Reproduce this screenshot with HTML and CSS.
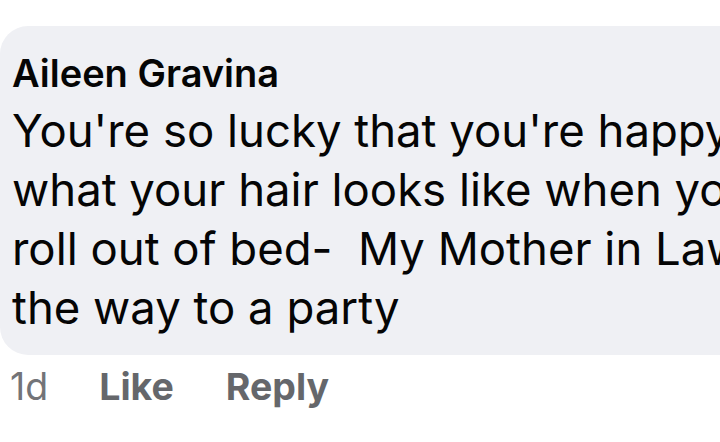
FILE: index.html
```html
<!DOCTYPE html>
<html>
<head>
<meta charset="utf-8">
<link rel="stylesheet" href="styles.css">
</head>
<body>
<div class="comment">
  <div class="bubble">
    <div class="name">Aileen Gravina</div>
    <div class="text">
      <div class="line">You're so lucky that you're happy with</div>
      <div class="line">what your hair looks like when you</div>
      <div class="line">roll out of bed-&nbsp; My Mother in Law</div>
      <div class="line">the way to a party</div>
    </div>
  </div>
  <div class="actions">
    <span class="time">1d</span>
    <span class="act">Like</span>
    <span class="act">Reply</span>
  </div>
</div>
</body>
</html>
```

FILE: styles.css
```css
html, body {
  margin: 0;
  padding: 0;
  background: #ffffff;
  overflow: hidden;
  width: 720px;
  height: 442px;
}
.comment {
  padding-top: 26px;
  font-family: Inter, "Liberation Sans", sans-serif;
}
.bubble {
  width: 820px;
  box-sizing: border-box;
  height: 329px;
  background: #eff0f4;
  border-radius: 28px;
  padding: 26px 0 0 12px;
  color: #050505;
}
.name {
  font-size: 38px;
  font-weight: 600;
  line-height: 42px;
}
.text {
  margin-top: 7px;
  font-size: 45.5px;
  line-height: 59px;
  font-weight: 400;
}
.line {
  white-space: nowrap;
}
.actions {
  display: flex;
  align-items: baseline;
  padding: 10px 0 0 10px;
  font-size: 37.5px;
  line-height: 44px;
  color: #65676b;
}
.time {
  font-weight: 400;
  color: #737478;
  margin-right: 51px;
}
.act {
  font-weight: 700;
  margin-right: 52px;
}
```
